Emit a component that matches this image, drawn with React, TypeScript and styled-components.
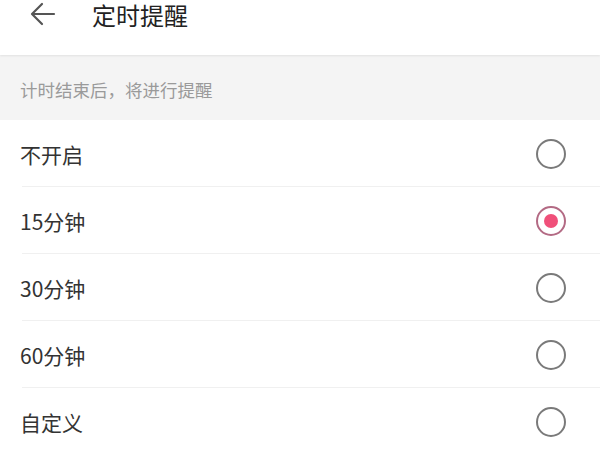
import styled, { createGlobalStyle } from 'styled-components';

const GlobalStyle = createGlobalStyle`
  body {
    margin: 0;
    background: #ffffff;
    font-family: 'Noto Sans CJK SC', 'Noto Sans', sans-serif;
  }
`;

const options = ['不开启', '15分钟', '30分钟', '60分钟', '自定义'];
const selected = 1;

const App: React.FC = () => {
  return (
    <Page>
      <GlobalStyle />
      <Header>
        <BackButton>
          <svg width="28" height="26" viewBox="0 0 28 26" fill="none">
            <path d="M25 13H4M13 3L3 13l10 10" stroke="#555" strokeWidth="2.2" strokeLinecap="round" strokeLinejoin="round" />
          </svg>
        </BackButton>
        <Title>定时提醒</Title>
      </Header>
      <Hint>计时结束后，将进行提醒</Hint>
      <List>
        {options.map((label, i) => (
          <Row key={label} $last={i === options.length - 1}>
            <Label>{label}</Label>
            <Radio $checked={i === selected} />
          </Row>
        ))}
      </List>
    </Page>
  );
};
export default App;

const Page = styled.div`
  width: 600px;
  height: 450px;
  overflow: hidden;
  background: #ffffff;
`;

const Header = styled.div`
  height: 55px;
  display: flex;
  align-items: flex-start;
  background: #ffffff;
  box-shadow: 0 1px 2px rgba(0, 0, 0, 0.08);
  position: relative;
  z-index: 1;
`;

const BackButton = styled.div`
  width: 60px;
  height: 27px;
  display: flex;
  align-items: center;
  padding-left: 29px;
  box-sizing: border-box;
`;

const Title = styled.h1`
  margin: 0;
  margin-left: 32px;
  padding-top: 1px;
  font-size: 24px;
  font-weight: 400;
  line-height: 28px;
  color: #222;
`;

const Hint = styled.div`
  height: 65px;
  display: flex;
  align-items: center;
  padding: 0 20px;
  padding-top: 4px;
  box-sizing: border-box;
  background: #f4f4f4;
  color: #9a9a9a;
  font-size: 17.5px;
`;

const List = styled.div`
  display: flex;
  flex-direction: column;
`;

const Row = styled.div<{ $last?: boolean }>`
  height: 67px;
  display: flex;
  align-items: center;
  justify-content: space-between;
  padding: 0 34px 0 20px;
  position: relative;

  &::after {
    content: '';
    display: ${(p) => (p.$last ? 'none' : 'block')};
    position: absolute;
    left: 22px;
    right: 0;
    bottom: 0;
    height: 1px;
    background: #f0f0f0;
  }
`;

const Label = styled.span`
  font-size: 21px;
  color: #333;
`;

const Radio = styled.span<{ $checked?: boolean }>`
  width: 26px;
  height: 26px;
  border-radius: 50%;
  border: 2px solid ${(p) => (p.$checked ? '#b36a84' : '#7a7a7a')};
  display: flex;
  align-items: center;
  justify-content: center;

  &::before {
    content: '';
    display: ${(p) => (p.$checked ? 'block' : 'none')};
    width: 14px;
    height: 14px;
    border-radius: 50%;
    background: #f0507a;
  }
`;
